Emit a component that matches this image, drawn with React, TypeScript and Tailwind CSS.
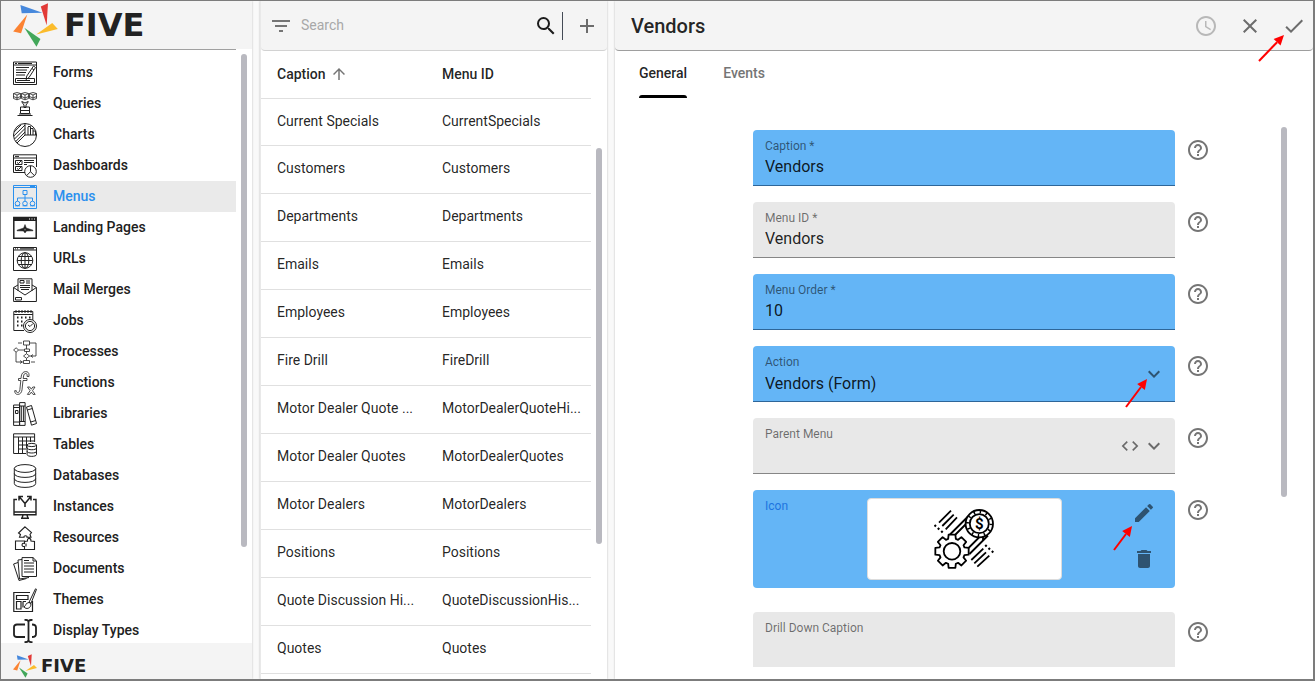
import type { ReactNode } from "react";
import {
  MdAccessTime,
  MdAdd,
  MdArrowUpward,
  MdClose,
  MdCode,
  MdDelete,
  MdDone,
  MdEdit,
  MdExpandMore,
  MdFilterList,
  MdHelpOutline,
  MdSearch,
} from "react-icons/md";

const NAV: { label: string; art: ReactNode }[] = [
  {
    label: "Forms",
    art: (
      <>
        <path d="M.5 1h23v22.500H.5zM.5 4h23M2 2.500h2M5 2.500h14M3 6.500h13M3 9h11M3 11.500h10M3 14h9M2.500 17.500h19v4h-19zM4 19.500h13" />
        <path d="M20.500 5l2 1.500-6.500 10-3 2 .8-3.500zM19 7.500l2 1.500" />
      </>
    ),
  },
  {
    label: "Queries",
    art: (
      <>
        <path d="M.5 1.500l3.500-1 3.500 1v5L4 7.800.5 6.500zM8.500 1.500l3.500-1 3.500 1v5L12 7.800 8.500 6.500zM16.500 1.500l3.500-1 3.500 1v5L20 7.800l-3.500-1.300zM.5 1.500L4 3l3.500-1.500M8.500 1.500L12 3l3.500-1.500M16.500 1.500L20 3l3.500-1.500M4 3v4.500M12 3v4.500M20 3v4.500M.5 4.500L4 6l3.500-1.500M8.500 4.500L12 6l3.500-1.500M16.500 4.500L20 6l3.500-1.500" strokeWidth=".8" />
        <path d="M8.500 9.500l2.500 3.500v2.500h2V13l2.500-3.500M9 9.500l3 1.500 3-1.500M7.500 15h9v6.500h-9zM6 22h12M4.500 23.500h15M7.500 18.500h9" />
      </>
    ),
  },
  {
    label: "Charts",
    art: (
      <>
        <circle cx="12" cy="12" r="11.500" />
        <path d="M12 12L4 20M12 12V.5M12 12h11.500M.8 13L12 2M1.500 16L12 5.500M2.800 18.500L12 9M1.200 9L8 2M15 12V4M15 3.500h2.500V12M20 12V5.500h-2.500M22.500 12V8H20" />
      </>
    ),
  },
  {
    label: "Dashboards",
    art: (
      <>
        <path d="M12 18.500H.5V.8h23V13M.5 4h23M2 2.400h4M2.500 6.500H9v4H2.500zM2.500 12.500H9v4H2.500zM4 8.500l1.500 1 3-3M4 14.500l1.500 1 3-3M11 6.500h10M11 8.500h10M11 10.500h3" />
        <circle cx="17.500" cy="17.500" r="5.800" />
        <path d="M17.500 11.700v6l-4 4M17.500 17.700l4 4" />
      </>
    ),
  },
  {
    label: "Menus",
    art: (
      <>
        <path d="M.5.5h23v23H.5zM.5 2.500h23M17 1.500h5M10 5.500h4v4h-4zM12 9.500V16M4.500 16v-3h15v3" />
        <circle cx="4.500" cy="18.500" r="2.300" />
        <circle cx="12" cy="18.500" r="2.300" />
        <circle cx="19.500" cy="18.500" r="2.300" />
        <path d="M2 20.800h5M9.500 20.800h5M17 20.800h5" />
      </>
    ),
  },
  {
    label: "Landing Pages",
    art: (
      <>
        <path d="M.8 1.500h22.400v20.800H.8z" strokeWidth="1.500" />
        <path d="M1 1.500h22v3H1z" fill="currentColor" />
        <path d="M16 3h1M18.500 3h1M21 3h1" stroke="white" />
        <path d="M12 8.500l1.300 3.500 6.700 2.200v.6L13.500 15 12 17l-1.500-2-6.500-.2v-.6l6.700-2.200z" fill="currentColor" strokeWidth=".5" />
        <circle cx="12" cy="13.800" r="1" fill="white" />
      </>
    ),
  },
  {
    label: "URLs",
    art: (
      <>
        <path d="M.5.5h23v23H.5zM.5 3h23M2 1.800h1M4 1.800h1M7 1.800h14" />
        <circle cx="12" cy="13.500" r="7.800" />
        <ellipse cx="12" cy="13.500" rx="3.800" ry="7.800" />
        <path d="M12 5.700v15.600M4.200 13.500h15.600M5.200 9.500h13.600M5.200 17.500h13.600" />
      </>
    ),
  },
  {
    label: "Mail Merges",
    art: (
      <>
        <path d="M5 13V.8h14V13M.6 9.500L5 7M23.400 9.500L19 7M.6 9.500L12 17l11.400-7.500v14H.6zM2.500 19.500h6v2.500h-6z" />
        <path d="M7 2.500h4v2.500H7zM13 3h4M13 5h4M7 7.500h10M7 9.500h10M8 11.500h8" />
      </>
    ),
  },
  {
    label: "Jobs",
    art: (
      <>
        <path d="M11 21.500H.8V2.500h19V11M.8 5.500h19" />
        <path d="M3 1v3M6 1v3M9 1v3M12 1v3M15 1v3M18 1v3" />
        <path d="M4 8.500h1.500M8 8.500h1.500M12 8.500h1.500M16 8.500h1.500M4 12.500h1.500M8 12.500h1.500M4 16.500h1.500M8 16.500h1.500" strokeWidth="2" />
        <circle cx="17" cy="17" r="6.500" />
        <circle cx="17" cy="17" r="4.600" />
        <path d="M15 16l2 1.500 3-3" />
      </>
    ),
  },
  {
    label: "Processes",
    art: (
      <>
        <path d="M10.500 1h6v4h-6zM11.500 9h5v2.500h-5zM10.500 20.500h6v3h-6zM.6 10l2.500-2.200L5.600 10l-2.500 2.200zM10.500 16l3-2.300 3 2.300-3 2.300zM13.500 5v4M13.500 11.500v2M13.500 18.300v2.200M5.600 10H11M3 12.200V22h7M16.500 3H23v13h-6.500M5 3h4M18 22h4" strokeWidth=".8" />
        <path d="M7 20.500L9 22l-2 1.500M20 14.500L18 16l2 1.500" strokeWidth=".8" />
      </>
    ),
  },
  {
    label: "Functions",
    art: (
      <>
        <path d="M16 5.500V3.800C16 1.700 14.700.6 12.800.6 10 .6 8.800 2.500 8.300 5L8 7.500H5.500v2h2.300l-.9 9c-.3 2.200-.9 3-2.300 3-.9 0-1.300-.4-1.300-1.800H1.700c0 2.400 1 3.700 3 3.700 2.500 0 3.900-1.800 4.300-4.500l1-9.400h4v-2h-3.800l.4-2.500c.3-1.800.9-2.500 2.200-2.500.9 0 1.300.6 1.300 1.500v1.500z" strokeWidth=".8" />
        <path d="M14.500 16h2.300l1.500 2.200 1.500-2.200H22l-2.500 3.700 2.700 3.700H20l-1.700-2.300-1.600 2.300h-2.300l2.700-3.700z" strokeWidth=".8" />
      </>
    ),
  },
  {
    label: "Libraries",
    art: (
      <path d="M.6 3h6v20.400h-6zM.6 5.500h6M.6 20h6M2.500 8.500h2.500v3H2.500zM6.600.6h5.500v22.800H6.600zM6.600 4h5.500M6.600 19.500h5.500M8.300 4v15.500M10.400 4v15.500M13.500 5l5-1.500 5 18-5 1.700zM14.300 8l5-1.500M17.700 20l5-1.500" />
    ),
  },
  {
    label: "Tables",
    art: (
      <>
        <path d="M13 20.500H.6V.8h21V9M.6 4h21M5.500 4v16.500M9.500 4v16.500M13.500 4v11M17.500 4v5M5.500 8h16M5.500 12h8M5.500 16h8" />
        <ellipse cx="18.800" cy="12" rx="4.700" ry="1.600" />
        <path d="M14.100 12v9.500c0 2.500 9.400 2.500 9.400 0V12M14.100 15c0 2.300 9.400 2.300 9.400 0M14.100 18.300c0 2.300 9.400 2.300 9.400 0" />
      </>
    ),
  },
  {
    label: "Databases",
    art: (
      <>
        <ellipse cx="12" cy="4.500" rx="10.700" ry="3.900" />
        <path d="M1.300 4.500v15c0 5.200 21.400 5.200 21.400 0v-15M1.300 9.500c0 5.200 21.400 5.200 21.400 0M1.300 14.500c0 5.200 21.400 5.200 21.400 0" />
      </>
    ),
  },
  {
    label: "Instances",
    art: (
      <>
        <path d="M4 4.500H1v15.300h22V4.500h-3M1 17h22M10 20l-1 3.300h6L14 20M8 23.300h8" strokeWidth="1.400" />
        <path d="M12 12V8.500L6.500 2M12 8.500L17.500 2M6 5.500V1.500h4M18 5.500V1.500h-4" strokeWidth="1.500" />
      </>
    ),
  },
  {
    label: "Resources",
    art: (
      <path d="M12 .8l6.500 5.700-1.500 2 1 2.700h-4c.5-2-3.500-2-3 0H6.500l1-2.700-2-1.500zM2.500 15h9v2.500c-3-1.200-3.500 3.700 0 3v3H2.500zM11.500 15.500l3-.5c-.5-3.500 3.500-3.500 3.500 0l3.500.5v8h-10M13 17.500v3" strokeWidth="1.100" />
    ),
  },
  {
    label: "Documents",
    art: (
      <>
        <path d="M9 .6h11l3.500 3.400v15.500H9zM20 .6V4h3.500M11 6h10M11 9h10M11 12h10M11 15h10M11 3.500h5" />
        <path d="M9 2.500L5 3l1.500 19 9.500-1.500M5 5.500L.6 7 6 23.500l7.500-2" />
      </>
    ),
  },
  {
    label: "Themes",
    art: (
      <>
        <path d="M17 4.500H.8v19h18.700V13M3.500 7.500H15v4H3.500zM3.500 13.500H8v7.500H3.500zM10 13.500h3M10 13.500v6" strokeWidth="1.200" />
        <path d="M22.500.8l1 .5-5.500 14-2-1zM16 14.500c-3 0-3 3-5 4.500 2 2.500 7 2 7-3.500z" />
      </>
    ),
  },
  {
    label: "Display Types",
    art: (
      <path d="M12 5.500H4c-2 0-3 1-3 2.500v7.500C1 17 2 18 4 18h8M19 5.500c2.500 0 4 1 4 3v6.500c0 2-1.500 3-4 3M15.500 2.500v19M11.500.8c2.500 0 4 .7 4 2.200 0-1.500 1.500-2.200 4-2.200M11.500 23.200c2.500 0 4-.7 4-2.200 0 1.500 1.500 2.200 4 2.200" strokeWidth="1.800" />
    ),
  },
];

const MENUS = [
  ["Current Specials", "CurrentSpecials"],
  ["Customers", "Customers"],
  ["Departments", "Departments"],
  ["Emails", "Emails"],
  ["Employees", "Employees"],
  ["Fire Drill", "FireDrill"],
  ["Motor Dealer Quote ...", "MotorDealerQuoteHi..."],
  ["Motor Dealer Quotes", "MotorDealerQuotes"],
  ["Motor Dealers", "MotorDealers"],
  ["Positions", "Positions"],
  ["Quote Discussion Hi...", "QuoteDiscussionHis..."],
  ["Quotes", "Quotes"],
];

function LogoMark({ className }: { className: string }) {
  return (
    <svg viewBox="0 0 136 134" className={className} aria-hidden="true">
      <path d="M22 6L89 30L26 31Z" fill="#4688dc" />
      <path d="M84 11L106 1L102 68Z" fill="#e23a37" />
      <path d="M70 96L119 61L136 79Z" fill="#fbbc2c" />
      <path d="M34 75L83 110L71 133Z" fill="#43a75a" />
      <path d="M43 35L0 87L24 92Z" fill="#fb8332" />
    </svg>
  );
}

// Pointer running from the bottom-left to the top-right corner of its box.
function Arrow({ width, height, className }: { width: number; height: number; className: string }) {
  const tip = [width - 1, 1];
  const tail = [2, height - 2];
  const length = Math.hypot(tip[0] - tail[0], tip[1] - tail[1]);
  const ux = (tip[0] - tail[0]) / length;
  const uy = (tip[1] - tail[1]) / length;
  const base = [tip[0] - ux * 10, tip[1] - uy * 10];
  return (
    <svg width={width} height={height} className={"pointer-events-none absolute z-10 max-w-none " + className} aria-hidden="true">
      <line x1={tail[0]} y1={tail[1]} x2={base[0]} y2={base[1]} stroke="#f00" strokeWidth="2" />
      <polygon
        points={[tip, [base[0] - uy * 4.8, base[1] + ux * 4.8], [base[0] + uy * 4.8, base[1] - ux * 4.8]].map((p) => p.join(",")).join(" ")}
        fill="#f00"
      />
    </svg>
  );
}

function Thumb({ className }: { className: string }) {
  return (
    <div className="w-4 shrink-0 pl-[5px]">
      <div className={"w-1.5 rounded-full bg-[#b9b9c0] " + className} />
    </div>
  );
}

function Row({ children, name }: { children: ReactNode; name: string }) {
  return (
    <div className="grid grid-cols-[1fr_minmax(0,422px)_1fr]">
      <div />
      {children}
      <button type="button" aria-label={"Help for " + name} className="mt-2 ml-[11px] h-6 w-6 text-[#757575]">
        <MdHelpOutline size={24} />
      </button>
    </div>
  );
}

function TextField({ id, label, value, blue }: { id: string; label: string; value: string; blue?: boolean }) {
  return (
    <Row name={label}>
      <div
        className={
          "flex h-14 flex-col rounded-t border-b px-3 pt-2 " +
          (blue ? "border-[#2e6699] bg-[#64b5f6]" : "border-[#868686] bg-[#e8e8e8]")
        }
      >
        <label htmlFor={id} className="text-xs leading-4 text-black/54">
          {label}
        </label>
        <input id={id} defaultValue={value} className="h-[25px] w-full bg-transparent text-base text-black/87 outline-none" />
      </div>
    </Row>
  );
}

function SelectField({
  id,
  label,
  value,
  blue,
  children,
}: {
  id: string;
  label: string;
  value: string;
  blue?: boolean;
  children?: ReactNode;
}) {
  return (
    <Row name={label}>
      <div
        className={
          "flex h-14 items-center rounded-t border-b pr-[9px] pl-3 text-black/54 " +
          (blue ? "border-[#2e6699] bg-[#64b5f6]" : "border-[#868686] bg-[#e8e8e8]")
        }
      >
        <div className="flex h-full flex-1 flex-col pt-2">
          <label htmlFor={id} className="text-xs leading-4">
            {label}
          </label>
          <select id={id} defaultValue={value} className="h-7 w-full appearance-none bg-transparent text-base text-black/87 outline-none">
            <option>{value}</option>
          </select>
        </div>
        {children}
        <MdExpandMore size={24} className="pointer-events-none" />
      </div>
    </Row>
  );
}

function BeltPicture() {
  const r = (n: number) => Math.round(n * 100) / 100;
  const gear: string[] = [];
  for (let i = 0; i < 8; i++) {
    const a = (i * Math.PI) / 4;
    for (const [radius, offset] of [
      [13, -0.3],
      [17, -0.2],
      [17, 0.2],
      [13, 0.3],
    ]) {
      gear.push(r(18 + radius * Math.sin(a + offset)) + "," + r(42.3 - radius * Math.cos(a + offset)));
    }
  }
  return (
    <svg viewBox="0 0 60 60" className="h-[60px] w-[60px]" fill="none" stroke="black" strokeWidth="1.800" role="img" aria-label="Gear and coin">
      <path d="M5 13.700L17 1.700M8.300 17L19.700 5.700M11.700 20.300L23 8.300M37.300 51L49.300 39.700M40.300 54.300L52 43.300M43.300 57.700L55.300 46.700" />
      <path d="M.5 17.500l1.500-1.500M3.800 20.500l1.500-1.500M7.200 23.500l1.500-1.500M51.200 37.500l1.500-1.500M54.500 40.500l1.500-1.500M57.800 43.500l1.500-1.500" strokeWidth="2" />
      <path d="M15.500 26L34 7.500M21.500 25.500L32 15M35.500 45L54 26.500M34 39.500L45 28.500M49 28v4" />
      <polygon points={gear.join(" ")} strokeLinejoin="round" fill="white" />
      <circle cx="18" cy="42.300" r="8.300" />
      <circle cx="45.300" cy="14.700" r="13.700" fill="white" />
      <circle cx="45.300" cy="14.700" r="11.800" strokeWidth="3" strokeDasharray="1.500 4.680" />
      <circle cx="45.300" cy="14.700" r="9.500" fill="white" />
      <text x="45.300" y="20" textAnchor="middle" fontFamily="Roboto, sans-serif" fontSize="15" fontWeight="700" fill="black" stroke="none">
        $
      </text>
    </svg>
  );
}

export default function App() {
  return (
    <div className="flex h-screen gap-2 overflow-hidden border-t border-r-2 border-b-2 border-l border-[#7c7c7c] bg-[#f9f9f9] font-[Roboto,sans-serif] text-sm text-black/87">
      <aside className="flex w-[251px] shrink-0 flex-col bg-white shadow-[0_0_2px_rgba(0,0,0,0.25)]">
        <header className="flex h-12 shrink-0 items-center bg-[#f4f4f4] pl-3">
          <LogoMark className="h-11 w-[45px]" />
          <span className="pl-1.5 font-[family-name:DejaVu_Sans,sans-serif] text-[32px] leading-8 font-bold text-[#222]">FIVE</span>
        </header>
        <div className="flex min-h-0 flex-1 overflow-hidden">
          <nav className="min-w-0 flex-1 border-t border-[#a0a0a0] pt-[7px]">
            {NAV.map(({ label, art }) => (
              <a
                key={label}
                href={"#" + label.toLowerCase().replace(" ", "-")}
                className={
                  "flex h-[31px] items-center gap-4 pl-3 font-medium " +
                  (label === "Menus" ? "bg-[#eaeaea] text-[#2b90ee]" : "text-[#212121]")
                }
              >
                <svg viewBox="0 0 24 24" className="h-6 w-6 shrink-0" fill="none" stroke="currentColor" strokeWidth="1" aria-hidden="true">
                  {art}
                </svg>
                <span className="pb-0.5">{label}</span>
              </a>
            ))}
          </nav>
          <Thumb className="mt-[5px] h-[83%]" />
        </div>
        <footer className="flex h-9 shrink-0 items-center bg-[#f4f4f4] pt-2.5 pl-3">
          <LogoMark className="h-6 w-6" />
          <span className="pl-1 font-[family-name:DejaVu_Sans,sans-serif] text-lg leading-6 font-bold text-[#222]">FIVE</span>
        </footer>
      </aside>

      <section className="flex w-[347px] shrink-0 flex-col border-l border-[#e9e9e9] bg-white shadow-[0_0_2px_rgba(0,0,0,0.25)]">
        <header className="flex h-[50px] shrink-0 items-center rounded-b border-b border-[#d2d2d2] bg-[#f4f4f4] px-2">
          <button aria-label="Filter" className="text-[#757575]">
            <MdFilterList size={24} />
          </button>
          <input aria-label="Search" placeholder="Search" className="ml-2 min-w-0 flex-1 bg-transparent pb-0.5 outline-none placeholder:text-[#a8a8a8]" />
          <button aria-label="Run search" className="text-[#1c1c1c]">
            <MdSearch size={24} />
          </button>
          <div className="mr-3 ml-1 h-7 w-px bg-[#444b55]" />
          <button aria-label="Add menu" className="text-[#6c6c6c]">
            <MdAdd size={24} />
          </button>
        </header>
        <div className="flex min-h-0 flex-1 overflow-hidden">
          <div className="min-w-0 flex-1">
            <table className="w-full table-fixed border-collapse text-left">
              <thead>
                <tr className="h-[47px] border-b border-[#e0e0e0]">
                  <th className="pl-4 font-medium">
                    <span className="flex items-center gap-1">
                      Caption
                      <MdArrowUpward size={18} className="text-[#757575]" />
                    </span>
                  </th>
                  <th className="pl-4 font-medium">Menu ID</th>
                </tr>
              </thead>
              <tbody>
                {MENUS.map(([caption, id]) => (
                  <tr key={id} className="h-12 border-b border-[#e0e0e0] first:h-[47px]">
                    <td className="pb-0.5 pl-4 whitespace-nowrap">{caption}</td>
                    <td className="pb-0.5 pl-4 whitespace-nowrap">{id}</td>
                  </tr>
                ))}
              </tbody>
            </table>
          </div>
          <Thumb className="mt-[97px] h-[63%]" />
        </div>
      </section>

      <main className="flex min-w-0 flex-1 flex-col bg-white shadow-[0_0_2px_rgba(0,0,0,0.25)]">
        <header className="flex h-[50px] shrink-0 items-center gap-5 rounded-b border-b border-[#9e9e9e] bg-[#f4f4f4] pr-[7px] pl-4">
          <h1 className="flex-1 text-xl font-medium">Vendors</h1>
          <button aria-label="History" className="text-[#b8b8b8]">
            <MdAccessTime size={24} />
          </button>
          <button aria-label="Cancel" className="text-[#6c6c6c]">
            <MdClose size={24} />
          </button>
          <button aria-label="Save" className="relative text-[#6c6c6c]">
            <MdDone size={24} />
            <Arrow width={28} height={29} className="top-5 right-[21px]" />
          </button>
        </header>
        <div role="tablist" className="flex h-[47px] shrink-0 gap-9 pl-6 font-medium">
          <button role="tab" aria-selected="true" className="flex flex-col justify-between pt-3">
            General
            <span className="h-[3px] w-full rounded-t bg-black" />
          </button>
          <button role="tab" aria-selected="false" className="self-start pt-3 text-[#757575]">
            Events
          </button>
        </div>
        <div className="mb-3 flex min-h-0 flex-1 overflow-hidden">
          <form className="flex min-w-0 flex-1 flex-col gap-4 pt-8 pl-8" onSubmit={(e) => e.preventDefault()}>
            <TextField id="caption" label="Caption *" value="Vendors" blue />
            <TextField id="menu-id" label="Menu ID *" value="Vendors" />
            <TextField id="menu-order" label="Menu Order *" value="10" blue />
            <SelectField id="action" label="Action" value="Vendors (Form)" blue>
              <div className="relative h-6">
                <Arrow width={24} height={31} className="top-4 -right-1.5" />
              </div>
            </SelectField>
            <SelectField id="parent-menu" label="Parent Menu" value="">
              <button type="button" aria-label="Edit expression" className="mr-0.5">
                <MdCode size={20} />
              </button>
            </SelectField>
            <Row name="Icon">
              <div className="mb-2 grid h-[98px] grid-cols-[1fr_195px_1fr] items-center rounded bg-[#64b5f6]">
                <span className="self-start pt-2 pl-3 text-xs leading-4 text-[#1d74e0]">Icon</span>
                <div className="flex h-[82px] items-center justify-center rounded border border-[#dcdcdc] bg-white">
                  <BeltPicture />
                </div>
                <div className="flex flex-col gap-[22px] self-start justify-self-end pt-[11px] pr-[19px] text-black/54">
                  <button type="button" aria-label="Change icon" className="relative">
                    <MdEdit size={24} />
                    <Arrow width={21} height={27} className="top-6 right-[23px]" />
                  </button>
                  <button type="button" aria-label="Remove icon">
                    <MdDelete size={24} />
                  </button>
                </div>
              </div>
            </Row>
            <TextField id="drill-down-caption" label="Drill Down Caption" value="" />
          </form>
          <div className="w-8 shrink-0">
            <div className="mt-[29px] h-[65%] w-1.5 rounded-full bg-[#b9b9c0]" />
          </div>
        </div>
      </main>
    </div>
  );
}
